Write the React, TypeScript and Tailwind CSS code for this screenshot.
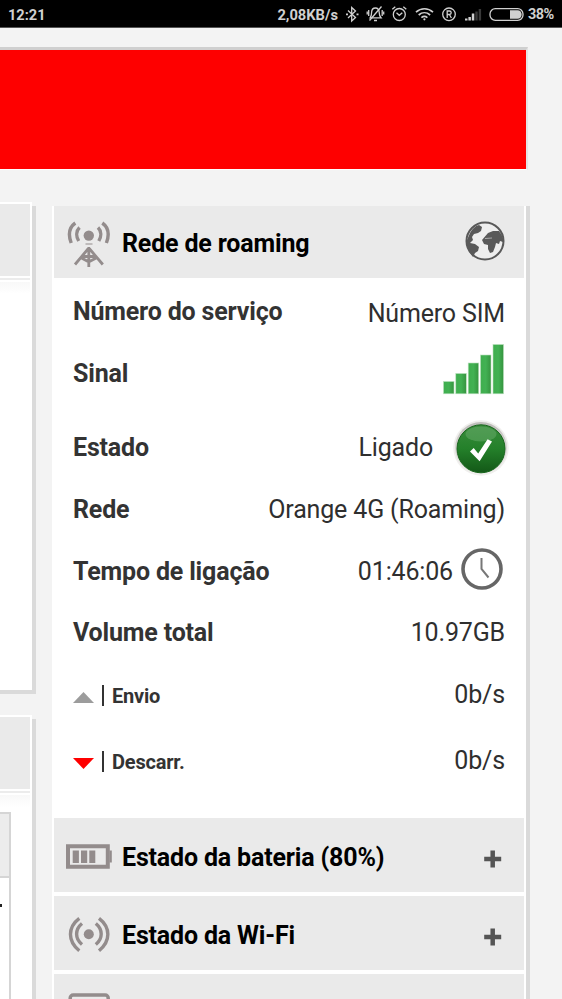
import type { ReactNode } from "react";
import { clsx } from "clsx";

function StatusBar() {
  return (
    <header className="flex h-7 shrink-0 items-center border-b border-[#555] bg-black pl-2 pr-2 text-[#d0d0d0]">
      <span className="pt-[3px] text-[14.6px] font-bold">12:21</span>
      <span className="ml-auto pt-[3px] text-[14.7px] font-bold">2,08KB/s</span>
      <svg className="ml-[6px] h-7 w-[181px]" viewBox="344 0 181 28" fill="none" stroke="#d0d0d0" strokeWidth="1.3">
        {/* bluetooth */}
        <path d="M348 10.5l7.5 7-3.8 3.5V7.5l3.8 3.5-7.5 7" />
        <path d="M346 14.3h2M356.5 14.3h2" strokeWidth="1.8" />
        {/* muted bell */}
        <path d="M370.5 17.8h10.5c-1.4-1.6-1.8-3-1.8-5.2 0-2.9-1.5-4.6-3.7-4.6s-3.9 1.8-3.9 4.6c0 2.2-.3 3.6-1.5 5.2zM374 20.5h3" />
        <path d="M368.7 10v6M382.2 10v6M367.2 11.5v3M383.7 11.5v3M381.5 6.5l-12 14" />
        {/* alarm */}
        <circle cx="399.3" cy="14.5" r="6" />
        <path d="M396.5 12.8l2.8 2.5 3-2.5M392.3 9.2l3-2.5M406.3 9.2l-3-2.5" />
        {/* wifi */}
        <path d="M416 12.2c5-4.6 12-4.6 17 0M418.7 15c3.4-3 8-3 11.4 0M421.4 17.6c1.9-1.5 4-1.5 6 0" strokeWidth="1.7" />
        <circle cx="424.4" cy="19.3" r="1.1" fill="#d0d0d0" stroke="none" />
        {/* roaming */}
        <circle cx="449" cy="14.3" r="6.3" />
        <path d="M447.2 18v-7h2.2c2.4 0 2.4 3.5 0 3.5h-2.2M449.4 14.5l2 3.5" />
        {/* signal */}
        <g fill="#d0d0d0" stroke="none">
          <path d="M465 18.5h2.5v2H465zM468.4 17h2.5v3.5h-2.5zM471.8 13.5h2.5v7h-2.5z" />
          <path d="M475.3 11.5h2.4v9h-2.4zM478.7 9h2.4v11.5h-2.4z" fill="#393939" />
        </g>
        {/* battery */}
        <rect x="490" y="8.7" width="33" height="11.6" rx="5.3" />
        <path d="M510 10.2h7.5c5.5 0 5.5 8.6 0 8.6H510z" fill="#d0d0d0" stroke="none" />
      </svg>
      <span className="ml-[3px] w-[26px] whitespace-nowrap pt-[3px] text-[14.5px] font-bold tracking-[-0.6px]">38%</span>
    </header>
  );
}

const TowerIcon = () => (
  <svg className="h-[50px] w-[46px]" viewBox="0 0 46 50" fill="none" stroke="#938c8c" strokeWidth="2.8">
    <circle cx="22.8" cy="18.6" r="5.2" fill="#938c8c" stroke="none" />
    <path d="M13.5 10.5c-3.5 3.5-3.5 9-.8 13.5M9.3 6C3 10.5 2.2 18 5.2 26M32 10.5c3.5 3.5 3.5 9 .8 13.5M36.3 6c6.3 4.5 7.1 12 4.1 20" strokeWidth="3.4" />
    <path d="M19.5 27h7" strokeWidth="1" />
    <path d="M22.8 30v21M22.8 31L9 47.5M22.8 31l14 16.5M16 39.5h13.6M15.5 41l7.3 4 7.3-4" />
  </svg>
);

const BatteryIcon = () => (
  <svg className="h-[50px] w-[46px]" viewBox="0 0 46 50">
    <path d="M2 16.2h39.8v20.6H2z" fill="none" stroke="#938c8c" strokeWidth="4" />
    <path d="M43.5 20.5h2.3v12h-2.3zM6.7 20.5h6.2v12.5H6.7zM15 20.5h6.2v12.5H15zM23.3 20.5h6v12.5h-6z" fill="#938c8c" />
  </svg>
);

const WifiIcon = () => (
  <svg className="h-[50px] w-[46px]" viewBox="0 0 46 50" fill="none" stroke="#938c8c" strokeWidth="3.4">
    <circle cx="22.8" cy="26.3" r="5" fill="#938c8c" stroke="none" />
    <path d="M13.3 10.3c-11.8 9-11.8 23 0 32.5M16 15.5c-7.2 6-7.2 15 0 21M33 10.3c11.8 9 11.8 23 0 32.5M29.8 15.5c7.2 6 7.2 15 0 21" />
  </svg>
);

const PhoneIcon = () => (
  <svg className="h-[50px] w-[46px]" viewBox="0 0 46 50" fill="none">
    <rect x="4.2" y="9" width="38" height="60" rx="3" stroke="#938c8c" strokeWidth="3.5" />
  </svg>
);

const GlobeIcon = () => (
  <svg className="size-10" viewBox="0 0 40 40">
    <circle cx="20" cy="20" r="18.5" fill="#eee" stroke="#595959" strokeWidth="2" />
    <path
      d="M5 12c2-4 5-7 9-8l3 2-1 4-3 2-4 1-2 3 1 3-3 3 5 1 4 3-1 4-3 2-2 4C4 31 1 25 2 19zM23 12l5-2 6 0c3 4 5 8 4 11l-3-1-1 3-3-1-1 4-2 5-3 1-2-4v-4l-4-1-2-4z"
      fill="#595959"
    />
    <path d="M20 17.5l7-.5" stroke="#aaa" strokeWidth="1" />
  </svg>
);

const SignalIcon = () => (
  <svg className="h-[52px] w-[62px]" viewBox="0 0 62 52">
    <defs>
      <linearGradient id="bar">
        <stop offset="0" stopColor="#3fae4e" />
        <stop offset=".5" stopColor="#42b153" />
        <stop offset="1" stopColor="#36943f" />
      </linearGradient>
    </defs>
    {[[0.5, 38.5], [12.8, 30.5], [25.2, 20], [37.5, 12], [50, 1.5]].map(([x, y]) => (
      <rect key={x} x={x} y={y} width="10.5" height={50.8 - y} fill="url(#bar)" stroke="#b9dfbc" strokeWidth=".6" />
    ))}
  </svg>
);

const CheckIcon = () => (
  <svg className="size-14" viewBox="0 0 56 56">
    <defs>
      <linearGradient id="ball" x2="0" y2="1">
        <stop offset="0" stopColor="#398c3c" />
        <stop offset=".5" stopColor="#24802a" />
        <stop offset="1" stopColor="#135817" />
      </linearGradient>
      <linearGradient id="ring" x2="0" y2="1">
        <stop offset="0" stopColor="#bebdba" />
        <stop offset="1" stopColor="#eeedeb" />
      </linearGradient>
    </defs>
    <circle cx="28" cy="28" r="27.7" fill="#f0efed" />
    <circle cx="28" cy="28" r="26" fill="url(#ring)" />
    <circle cx="28" cy="28.8" r="24" fill="url(#ball)" stroke="#18651c" strokeWidth="1" />
    <ellipse cx="28" cy="14" rx="15.5" ry="7.5" fill="#79b77a" opacity=".4" />
    <path d="M17 31.5l3.7-3.4 4.5 5.4 9.4-14.3 4.4 2.3-12.4 19.7z" fill="#fff" />
  </svg>
);

const ClockIcon = () => (
  <svg className="size-[42px]" viewBox="0 0 42 42" fill="none">
    <circle cx="21" cy="21" r="19" stroke="#666" strokeWidth="3.6" />
    <path d="M20.5 10v11l7 8.5" stroke="#777" strokeWidth="2" />
  </svg>
);

function Row({ label, children, className }: { label: ReactNode; children: ReactNode; className?: string }) {
  return (
    <div className={clsx("flex h-[62px] items-center justify-between", className)}>
      <div className="flex items-center text-[25px] font-bold tracking-[-0.17px] text-[#333]">{label}</div>
      <div className="flex items-center text-[25px] tracking-[-0.16px] text-[#2f2f2f]">{children}</div>
    </div>
  );
}

function Section({ title, icon, children, className }: { title?: string; icon: ReactNode; children?: ReactNode; className?: string }) {
  return (
    <div className={clsx("mx-0.5 flex shrink-0 items-center bg-[#eaeaea] pl-3", className)}>
      {icon}
      <h2 className="ml-2.5 text-[25px] font-bold tracking-[-0.17px] text-black">{title}</h2>
      {children}
    </div>
  );
}

const Plus = () => (
  <svg className="ml-auto mr-[22px] mt-2 size-[18px]" viewBox="0 0 18 18">
    <path d="M8.7.5v17M.2 9h17" stroke="#555" strokeWidth="4.5" />
  </svg>
);

// Sliver of the main column, cut off by the horizontal scroll
function SidePanel({ className, children }: { className?: string; children?: ReactNode }) {
  return (
    <div className={clsx("-ml-2 flow-root w-10 bg-white pl-2 shadow-[4px_4px_0_#dadada]", className)}>
      <div className="mr-[2px] mt-0.5 h-[72px] bg-[#eaeaea]" />
      <div className="mr-[2px] mt-0.5 h-0.5 bg-[#ececec]" />
      <div className="mr-[2px] mt-0.5 h-3 bg-linear-to-b from-[#f8f8f8] to-white" />
      {children}
    </div>
  );
}

export default function App() {
  return (
    <div className="flex h-[999px] w-[562px] flex-col overflow-hidden bg-[#f3f3f3] font-['Roboto',sans-serif] leading-none">
      <StatusBar />
      <div className="mt-[19px] h-[123px] w-[528px] shrink-0 border-b border-r-2 border-t-3 border-b-white border-r-[#e4e4e4] border-t-[#cfcfcf] bg-[#fe0000]" />

      <main className="flex grow">
        <div className="w-[52px] shrink-0">
          <SidePanel className="mt-8 h-[488px]" />
          <SidePanel className="mt-[25px] h-[400px]">
            <div className="mt-[5px] h-[300px] w-[11px] border-r-2 border-t-2 border-[#d5d5d5]">
              <div className="h-16 border-b-2 border-[#d5d5d5] bg-[#ececec]" />
              <div className="mt-[26px] h-[3px] w-0.5 bg-[#222]" />
            </div>
          </SidePanel>
        </div>

        <section className="mt-9 flex h-[900px] w-[478px] flex-col border-r-4 border-[#dadada] bg-white">
          <Section title="Rede de roaming" icon={<TowerIcon />} className="h-[72px] [&>h2]:pt-[3px]">
            <span className="-mt-0.5 ml-auto mr-[19.5px]"><GlobeIcon /></span>
          </Section>

          <div className="flex h-[540px] shrink-0 flex-col pl-[21px] pr-[21px] pt-0.5">
            <Row label="Número do serviço"><span className="pt-1">Número SIM</span></Row>
            <Row label="Sinal"><span className="-mt-2"><SignalIcon /></span></Row>
            <Row label="Estado" className="mt-3">
              Ligado
              <span className="-mr-1 ml-5 mt-0.5"><CheckIcon /></span>
            </Row>
            <Row label="Rede">Orange 4G (Roaming)</Row>
            <Row label="Tempo de ligação">
              01:46:06
              <span className="-mt-1 ml-2 mr-0.5"><ClockIcon /></span>
            </Row>
            <Row label={<span className="pb-px">Volume total</span>}><span className="pb-0.5">10.97GB</span></Row>
            <Row
              label={
                <>
                  <svg className="mt-1 h-[11px] w-[21px]" viewBox="0 0 21 11"><path d="M10.5 0L21 11H0z" fill="#9c9c9c" /></svg>
                  <i className="ml-2 h-[21px] w-0.5 bg-[#333]" />
                  <span className="ml-2 pt-px text-[20px] tracking-[-0.2px]">Envio</span>
                </>
              }
            >
              <span className="pb-0.5">0b/s</span>
            </Row>
            <Row
              className="mt-1"
              label={
                <>
                  <svg className="mt-1 h-[11px] w-[21px]" viewBox="0 0 21 11"><path d="M0 0h21L10.5 11z" fill="#fe0000" /></svg>
                  <i className="ml-2 h-[21px] w-0.5 bg-[#333]" />
                  <span className="ml-2 pt-px text-[20px] tracking-[-0.2px]">Descarr.</span>
                </>
              }
            >
              <span className="pb-0.5">0b/s</span>
            </Row>
          </div>

          <Section title="Estado da bateria (80%)" icon={<BatteryIcon />} className="h-[74px] [&>h2]:pt-[5px]"><Plus /></Section>
          <Section title="Estado da Wi-Fi" icon={<WifiIcon />} className="mt-1 h-[74px] [&>h2]:pt-[5px]"><Plus /></Section>
          <Section icon={<PhoneIcon />} className="mt-1 h-[74px]" />
        </section>
      </main>
    </div>
  );
}
